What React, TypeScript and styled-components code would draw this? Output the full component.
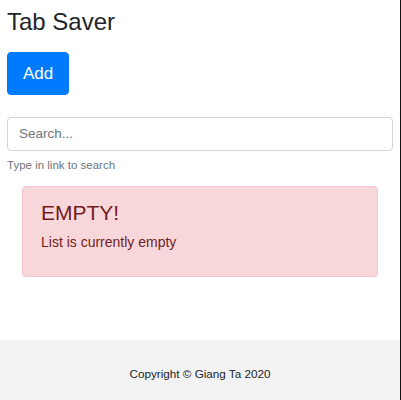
import React from "react";
import styled, { createGlobalStyle } from "styled-components";

const GlobalStyle = createGlobalStyle`
  html {
    background: #111;
  }
  body {
    margin: 0;
    width: 400px;
    min-height: 400px;
    background: #fff;
    font-family: "Liberation Sans", Arial, sans-serif;
    color: #212529;
  }
  * { box-sizing: border-box; }
`;

const Page = styled.div`
  display: flex;
  flex-direction: column;
  min-height: 400px;
`;

const Main = styled.main`
  flex: 1;
  padding: 8px 7px 0 7px;
  display: flex;
  flex-direction: column;
`;

const Title = styled.h1`
  margin: 0 0 15px 0;
  font-size: 24px;
  font-weight: 400;
  line-height: 1.2;
`;

const AddButton = styled.button`
  align-self: flex-start;
  font-family: inherit;
  font-size: 17px;
  line-height: 25px;
  padding: 8px 15px;
  border: 1px solid #007bff;
  border-radius: 4px;
  background: #007bff;
  color: #fff;
  cursor: pointer;
`;

const SearchGroup = styled.div`
  margin-top: 22px;
  display: flex;
  flex-direction: column;
`;

const SearchInput = styled.input`
  width: 386px;
  height: 34px;
  padding: 0 11px;
  font-family: inherit;
  font-size: 13.5px;
  color: #495057;
  border: 1px solid #ced4da;
  border-radius: 4px;
  outline: none;
  &::placeholder {
    color: #6c757d;
  }
`;

const HelpText = styled.small`
  margin-top: 6px;
  font-size: 11.5px;
  line-height: 16px;
  color: #6c757d;
`;

const Alert = styled.div`
  margin: 13px 15px 0 15px;
  height: 91px;
  padding: 13px 18px;
  background: #f8d7da;
  border: 1px solid #f5c6cb;
  border-radius: 4px;
  color: #721c24;
`;

const AlertHeading = styled.h4`
  margin: 0 0 7px 0;
  font-size: 21px;
  font-weight: 400;
  line-height: 1.2;
`;

const AlertText = styled.p`
  margin: 0;
  font-size: 14px;
  line-height: 21px;
`;

const Footer = styled.footer`
  height: 60px;
  background: #f2f2f2;
  display: flex;
  justify-content: center;
  padding-top: 26px;
  font-size: 11.7px;
  line-height: 16px;
  color: #212529;
`;

export default function App() {
  return (
    <>
      <GlobalStyle />
      <Page>
        <Main>
          <Title>Tab Saver</Title>
          <AddButton>Add</AddButton>
          <SearchGroup>
            <SearchInput placeholder="Search..." />
            <HelpText>Type in link to search</HelpText>
          </SearchGroup>
          <Alert>
            <AlertHeading>EMPTY!</AlertHeading>
            <AlertText>List is currently empty</AlertText>
          </Alert>
        </Main>
        <Footer>Copyright © Giang Ta 2020</Footer>
      </Page>
    </>
  );
}
